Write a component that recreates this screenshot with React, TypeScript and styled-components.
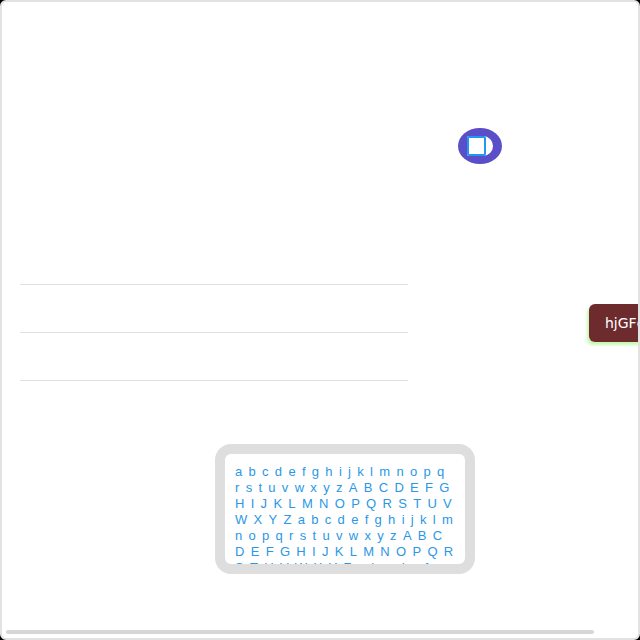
import React from "react";
import styled, { createGlobalStyle } from "styled-components";

const Global = createGlobalStyle`
  html, body { margin: 0; padding: 0; background: #000; }
  body { font-family: "Liberation Sans", Arial, sans-serif; }
`;

const Frame = styled.div`
  position: relative;
  box-sizing: border-box;
  width: 640px;
  height: 640px;
  background: #fff;
  border: 2px solid #e2e2e2;
  border-radius: 6px;
  overflow: hidden;
`;

const ScrollThumb = styled.div`
  position: absolute;
  left: 4px;
  bottom: 4px;
  width: 588px;
  height: 4px;
  border-radius: 2px;
  background: #d6d6d6;
`;

const Content = styled.div`
  width: 679px;
  display: flex;
  flex-direction: column;
  align-items: flex-start;
`;

const Toggle = styled.div`
  margin: 126px 0 0 456px;
  width: 44px;
  height: 36px;
  box-sizing: border-box;
  border-radius: 50%;
  background: #5b4fc9;
  display: flex;
  align-items: center;
  padding-left: 9px;
`;

const Thumb = styled.div`
  width: 26px;
  height: 20px;
  background: #fff;
  border-radius: 2px 10px 10px 2px;
  display: flex;
`;

const Check = styled.div`
  box-sizing: border-box;
  width: 19px;
  height: 20px;
  border: 2px solid #2196f3;
  border-radius: 2px;
  background: #fff;
`;

const MiddleRow = styled.div`
  display: flex;
  align-items: flex-start;
`;

const List = styled.ul`
  list-style: none;
  margin: 120px 0 0 18px;
  padding: 0;
  width: 388px;
`;

const Item = styled.li`
  box-sizing: border-box;
  height: 48px;
  border-top: 1px solid #e0e0e0;
`;

const BrownButton = styled.button`
  margin: 140px 0 0 181px;
  height: 38px;
  width: 92px;
  box-sizing: border-box;
  padding: 0 16px;
  border: none;
  border-radius: 6px;
  background: #6d2b2d;
  color: #fff;
  font-family: "DejaVu Sans", "Liberation Sans", sans-serif;
  font-size: 14px;
  text-align: left;
  white-space: nowrap;
  box-shadow: -2px 3px 3px rgba(180, 245, 150, 0.75);
`;

const TextBox = styled.div`
  margin: 16px 0 0 213px;
  box-sizing: border-box;
  width: 260px;
  height: 130px;
  border: 10px solid #dedede;
  border-radius: 16px;
  background: #fff;
  overflow: hidden;
  padding: 10px 0 0 10px;
`;

const Letters = styled.div`
  width: 225.3px;
  font-family: "Liberation Sans", Arial, sans-serif;
  font-size: 13px;
  line-height: 16px;
  letter-spacing: 6.3px;
  color: #2a98e6;
  word-break: break-all;
`;

const alphabet = "abcdefghijklmnopqrstuvwxyzABCDEFGHIJKLMNOPQRSTUVWXYZ";

export default function App() {
  return (
    <>
      <Global />
      <Frame>
        <Content>
          <Toggle>
            <Thumb>
              <Check />
            </Thumb>
          </Toggle>
          <MiddleRow>
            <List>
              <Item />
              <Item />
              <Item />
            </List>
            <BrownButton>hjGFdsfg</BrownButton>
          </MiddleRow>
          <TextBox>
            <Letters>{alphabet + alphabet + alphabet}</Letters>
          </TextBox>
        </Content>
        <ScrollThumb />
      </Frame>
    </>
  );
}
